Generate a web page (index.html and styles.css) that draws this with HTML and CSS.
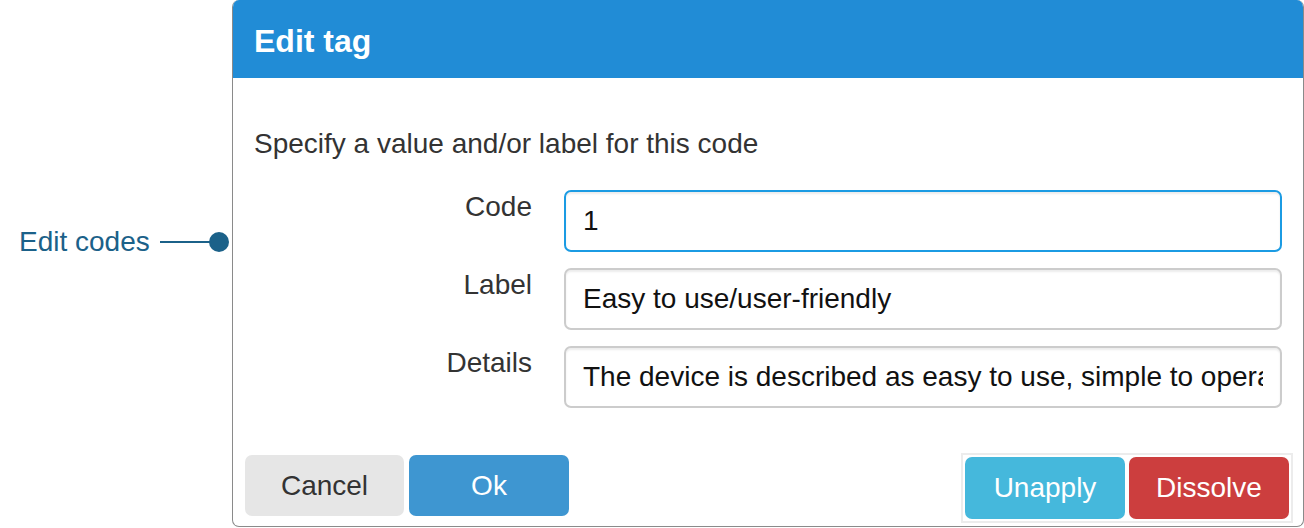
FILE: index.html
```html
<!DOCTYPE html>
<html lang="en">
<head>
<meta charset="utf-8">
<title>Edit tag</title>
<link rel="stylesheet" href="styles.css">
</head>
<body>
<div class="page">
  <aside class="callout">
    <span class="callout-text">Edit codes</span>
    <span class="callout-line"></span>
    <span class="callout-dot"></span>
  </aside>
  <section class="dialog">
    <header class="dialog-header">
      <h1 class="dialog-title">Edit tag</h1>
    </header>
    <div class="dialog-body">
      <p class="intro">Specify a value and/or label for this code</p>
      <form class="form">
        <label class="field-label" for="code">Code</label>
        <input id="code" class="field-input is-focused" type="text" value="1">
        <label class="field-label" for="label">Label</label>
        <input id="label" class="field-input" type="text" value="Easy to use/user-friendly">
        <label class="field-label" for="details">Details</label>
        <input id="details" class="field-input" type="text" value="The device is described as easy to use, simple to operate and intuitive.">
      </form>
    </div>
    <footer class="dialog-footer">
      <div class="actions-left">
        <button class="btn btn-cancel" type="button">Cancel</button>
        <button class="btn btn-ok" type="button">Ok</button>
      </div>
      <div class="actions-right">
        <button class="btn btn-unapply" type="button">Unapply</button>
        <button class="btn btn-dissolve" type="button">Dissolve</button>
      </div>
    </footer>
  </section>
</div>
</body>
</html>
```

FILE: styles.css
```css
* {
  box-sizing: border-box;
}

html, body {
  margin: 0;
  padding: 0;
  background: #ffffff;
}

body {
  font-family: "Liberation Sans", Arial, Helvetica, sans-serif;
  color: #333333;
}

.page {
  display: flex;
  width: 1304px;
  height: 528px;
  overflow: hidden;
}

/* Callout on the left */
.callout {
  flex: none;
  width: 232px;
  height: 28px;
  margin-top: 228px;
  padding: 0 3px 0 19px;
  display: flex;
  align-items: center;
  color: #1b6189;
}

.callout-text {
  font-size: 28px;
  line-height: 28px;
  white-space: nowrap;
}

.callout-line {
  flex: 1;
  height: 2px;
  margin-left: 10px;
  background: #1b6189;
}

.callout-dot {
  flex: none;
  width: 20px;
  height: 20px;
  margin-left: -1px;
  border-radius: 50%;
  background: #1b6189;
}

/* Dialog */
.dialog {
  flex: none;
  width: 1072px;
  height: 527px;
  border: 1px solid #8a8a8a;
  border-top: 0;
  border-radius: 7px;
  overflow: hidden;
  background: #ffffff;
  display: flex;
  flex-direction: column;
}

.dialog-header {
  height: 78px;
  background: #218cd6;
  padding: 25px 21px 0;
}

.dialog-title {
  margin: 0;
  font-size: 32px;
  line-height: 32px;
  font-weight: bold;
  color: #ffffff;
}

.dialog-body {
  padding: 46px 21px 0;
}

.intro {
  margin: 0;
  font-size: 28px;
  line-height: 40px;
  color: #333333;
}

.form {
  margin-top: 26px;
  display: grid;
  grid-template-columns: 278px 1fr;
  column-gap: 32px;
  row-gap: 16px;
}

.field-label {
  text-align: right;
  font-size: 28px;
  line-height: 34px;
  color: #333333;
}

.field-input {
  display: block;
  width: 100%;
  height: 62px;
  margin: 0;
  padding: 0 17px;
  border: 2px solid #cccccc;
  border-radius: 7px;
  background: #ffffff;
  box-shadow: inset 0 2px 2px rgba(0, 0, 0, 0.075);
  font-family: "Liberation Sans", Arial, Helvetica, sans-serif;
  font-size: 28px;
  color: #111111;
  outline: none;
}

.field-input.is-focused {
  border-color: #1b9be3;
}

/* Footer */
.dialog-footer {
  margin-top: 45px;
  padding: 0 10px 0 12px;
  display: flex;
  justify-content: space-between;
  align-items: flex-start;
}

.actions-left {
  display: flex;
  gap: 5px;
  margin-top: 2px;
}

.actions-right {
  display: flex;
  gap: 4px;
  padding: 2px;
  border: 2px solid #ececec;
}

.btn {
  height: 61px;
  width: 160px;
  margin: 0;
  padding: 0;
  border: 0;
  border-radius: 7px;
  font-family: "Liberation Sans", Arial, Helvetica, sans-serif;
  font-size: 28px;
  color: #ffffff;
  cursor: pointer;
}

.btn-cancel {
  width: 159px;
  background: #e6e6e6;
  color: #333333;
}

.btn-ok {
  background: #3e96d1;
}

.btn-unapply {
  height: 62px;
  background: #45b8dc;
}

.btn-dissolve {
  height: 62px;
  background: #cc3e3e;
}
```
